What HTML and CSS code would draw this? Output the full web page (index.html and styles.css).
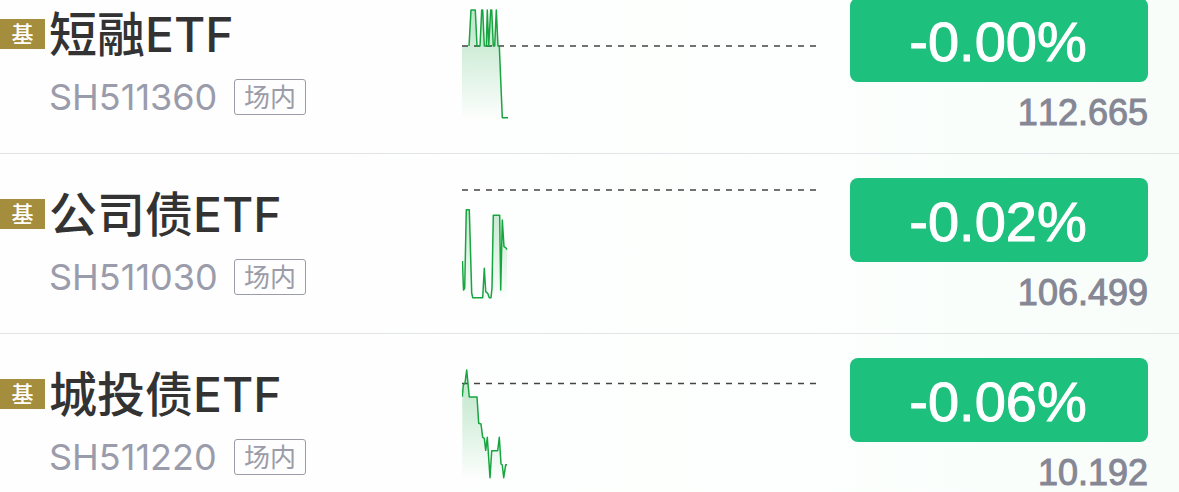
FILE: index.html
```html
<!DOCTYPE html>
<html lang="zh-CN">
<head>
  <meta charset="UTF-8">
  <meta name="viewport" content="width=device-width, initial-scale=1.0">
  <title>自选基金</title>
  <link rel="stylesheet" href="styles.css">
</head>
<body>
  <main class="watchlist">
    <ul class="rows">
      <li class="row">
        <div class="fund">
          <div class="fund-title"><span class="badge">基</span><h2>短融ETF</h2></div>
          <div class="fund-meta"><span class="code">SH511360</span><span class="tag">场内</span></div>
        </div>
        <svg class="chart" aria-hidden="true">
          <defs>
            <linearGradient id="fade" gradientUnits="userSpaceOnUse" x1="0" y1="0" x2="0" y2="112">
              <stop offset="0" stop-color="#16a53f" stop-opacity=".28"/>
              <stop offset=".35" stop-color="#16a53f" stop-opacity=".2"/>
              <stop offset="1" stop-color="#16a53f" stop-opacity="0"/>
            </linearGradient>
          </defs>
          <path class="area" d="M0 38H7L9 2H13.3L15 38H18L19.7 2H20.7L22.3 38H24.3L25.3 2L26.7 38L28.7 2H29.7L31.3 38H32.7L34.3 2L36 38H37.3L40.3 109.7V112H0Z"/>
          <line class="base" x1="0" y1="38" x2="100%" y2="38"/>
          <path class="line" d="M7 38L9 2H13.3L15 38H18L19.7 2H20.7L22.3 38H24.3L25.3 2L26.7 38L28.7 2H29.7L31.3 38H32.7L34.3 2L36 38H37.3L40.3 109.7H46"/>
        </svg>
        <div class="quote">
          <button type="button" class="change">-0.00%</button>
          <span class="price">112.665</span>
        </div>
      </li>

      <li class="row">
        <div class="fund">
          <div class="fund-title"><span class="badge">基</span><h2>公司债ETF</h2></div>
          <div class="fund-meta"><span class="code">SH511030</span><span class="tag">场内</span></div>
        </div>
        <svg class="chart" aria-hidden="true">
          <path class="area" d="M.5 73L1.5 102L2.7 100L4.3 21.7H7.3L9.7 105L10.7 109.7H20.7L22.3 80.3L23.7 103.7L25.7 105.3L27.3 109.7H29L30 100L31.3 27.3H37.7L38.7 102L40.3 32L42 58.7L43.7 59.7L45 61.7V112H.5Z"/>
          <line class="base" x1="0" y1="2" x2="100%" y2="2"/>
          <path class="line" d="M.5 73L1.5 102L2.7 100L4.3 21.7H7.3L9.7 105L10.7 109.7H20.7L22.3 80.3L23.7 103.7L25.7 105.3L27.3 109.7H29L30 100L31.3 27.3H37.7L38.7 102L40.3 32L42 58.7L43.7 59.7L45 61.7"/>
        </svg>
        <div class="quote">
          <button type="button" class="change">-0.02%</button>
          <span class="price">106.499</span>
        </div>
      </li>

      <li class="row">
        <div class="fund">
          <div class="fund-title"><span class="badge">基</span><h2>城投债ETF</h2></div>
          <div class="fund-meta"><span class="code">SH511220</span><span class="tag">场内</span></div>
        </div>
        <svg class="chart" aria-hidden="true">
          <path class="area" d="M.3 28.7L1.3 17L3 15L4.7 2L7.3 29H15L16.7 55.3L19 56L20.7 69.3L22.3 70.3L23.7 82.3L25.3 69.3L28 109.7L29.7 82.7H35.7L37.3 69.3L39 96L40.3 97L41.7 109.7L43.7 96.7H45V112H.3Z"/>
          <line class="base" x1="0" y1="15.5" x2="100%" y2="15.5"/>
          <path class="line" d="M.3 28.7L1.3 17L3 15L4.7 2L7.3 29H15L16.7 55.3L19 56L20.7 69.3L22.3 70.3L23.7 82.3L25.3 69.3L28 109.7L29.7 82.7H35.7L37.3 69.3L39 96L40.3 97L41.7 109.7L43.7 96.7H45"/>
        </svg>
        <div class="quote">
          <button type="button" class="change">-0.06%</button>
          <span class="price">10.192</span>
        </div>
      </li>
    </ul>
  </main>
</body>
</html>
```

FILE: styles.css
```css
* { box-sizing: border-box; margin: 0; padding: 0; }

body {
  font-family: Inter, "Noto Sans CJK SC", sans-serif;
  color: #333;
}

.watchlist {
  height: 100vh;
  overflow: hidden;
  background: linear-gradient(to right, #fefefe 30%, #fcfffd 65%, #f8fdfa);
}

/* list is scrolled a little past the top of the first row */
.rows {
  list-style: none;
  margin-top: -26px;
}

.row {
  display: grid;
  grid-template-columns: 428px 1fr 298px;
  column-gap: 34px;
  height: 180px;
  padding-right: 31px;
  border-bottom: 1px solid #e2e4e6;
}

/* Name and code */
.fund { padding-top: 24px; }

.fund-title {
  display: flex;
  align-items: center;
  gap: 4px;
  height: 72px;
}
.fund-title h2 {
  padding-top: 2px;
  font-size: 48px;
  font-weight: 500;
  line-height: 68px;
  white-space: nowrap;
}

.badge {
  width: 45px;
  height: 30px;
  background: #a58d3e;
  color: #fff;
  font-size: 22px;
  font-weight: 500;
  line-height: 30px;
  text-align: center;
}

.fund-meta {
  display: flex;
  align-items: center;
  margin-top: 9px;
  padding-left: 49px;
}
.code {
  width: 185px;
  color: #9b9cab;
  font-size: 36px;
  line-height: 36px;
}
.tag {
  width: 72px;
  height: 36px;
  border: 1px solid #9b9ca8;
  border-radius: 3px;
  color: #9b9ca8;
  font-size: 26px;
  font-weight: 400;
  line-height: 36px;
  text-align: center;
}

/* Intraday chart */
.chart {
  display: block;
  width: 100%;
  height: 112px;
  margin-top: 34px;
}
.area { fill: url(#fade); }
.line {
  fill: none;
  stroke: #16a53f;
  stroke-width: 1.5;
  stroke-linejoin: round;
}
.base {
  stroke: #444;
  stroke-width: 1.5;
  stroke-dasharray: 6 6;
}

/* Change and price */
.quote {
  display: flex;
  flex-direction: column;
  padding-top: 24px;
  font-family: "Liberation Sans", sans-serif;
  font-kerning: none;
}
.change {
  height: 84px;
  padding: 4px 2px 0 0;
  border: 0;
  border-radius: 8px;
  background: #1ec07d;
  color: #fff;
  font-family: inherit;
  font-size: 56px;
  line-height: 80px;
  -webkit-text-stroke: 1px #fff;
}
.price {
  margin-top: 14px;
  color: #868795;
  font-size: 36px;
  line-height: 34px;
  text-align: right;
  -webkit-text-stroke: 1px #868795;
}
```
